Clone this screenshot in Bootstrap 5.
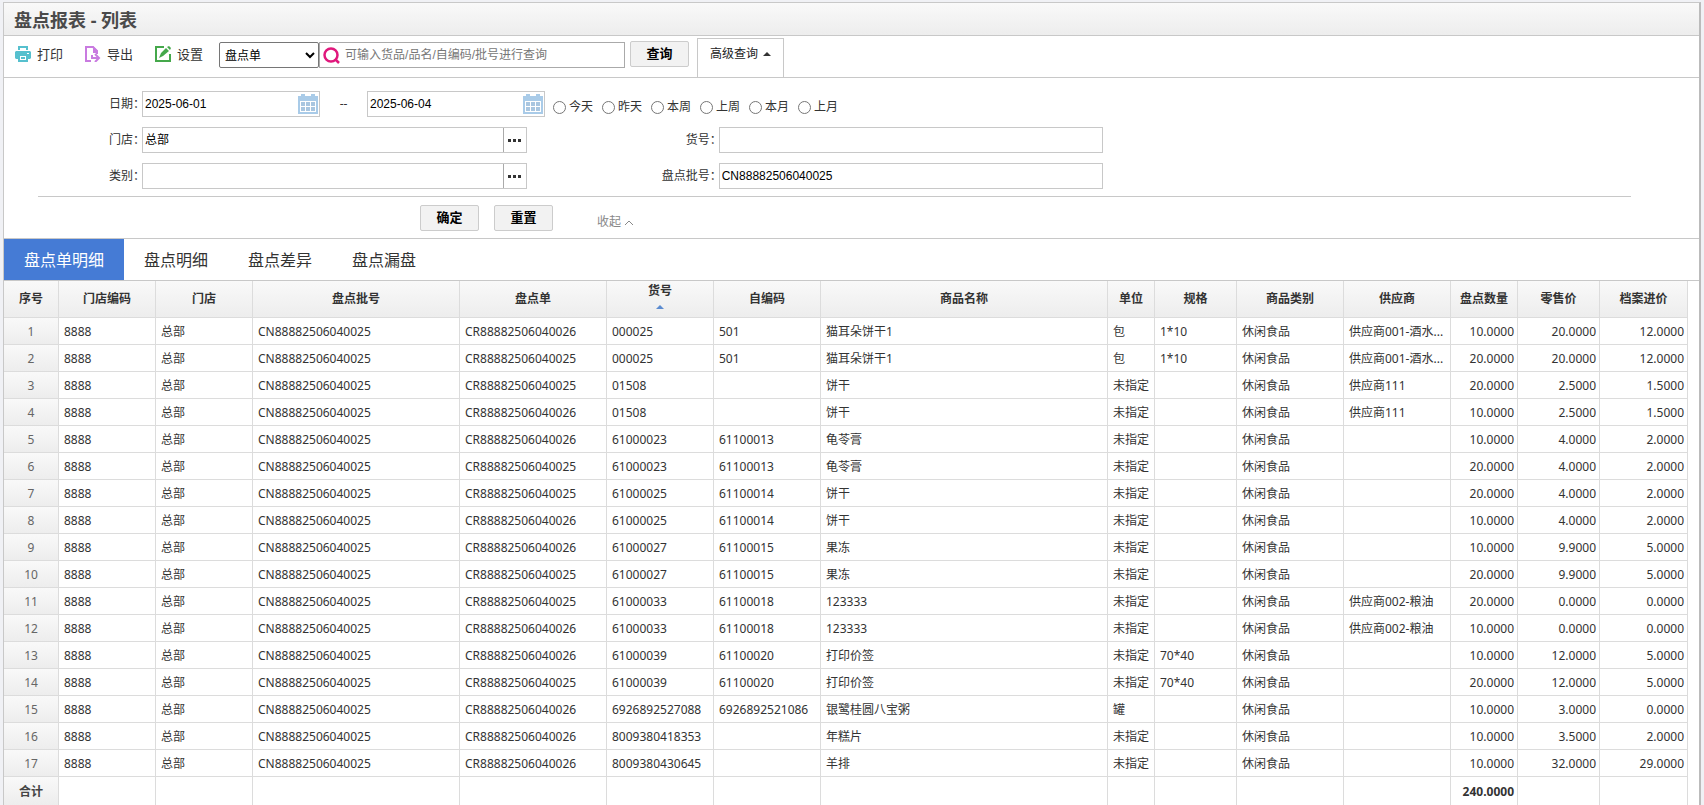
<!DOCTYPE html>
<html lang="zh-CN">
<head>
<meta charset="utf-8">
<meta name="viewport" content="width=device-width, initial-scale=1">
<title>盘点报表 - 列表</title>
<link href="https://cdn.jsdelivr.net/npm/bootstrap@5.3.0/dist/css/bootstrap.min.css" rel="stylesheet">
<style>
  :root { --line: #c8c8c8; --cell-line: #dcdcdc; --shade: linear-gradient(#f9f9f9, #ededed); }
  body { font-family: "Noto Sans", "Noto Sans CJK SC", sans-serif; font-size: 12px; line-height: 18px; color: #333; background: #f0f1f5; padding: 2px 3px 0; }
  .report-panel { min-height: calc(100vh - 2px); background: #fff; border: 1px solid var(--line); border-right: 2px solid #bbb; border-bottom: 0; }
  .panel-title { height: 33px; font-size: 18px; line-height: 34px; font-weight: 700; color: #4a4a4a; background: var(--shade); border-bottom: 1px solid var(--line); padding-left: 10px; }
  .toolbar { height: 42px; border-bottom: 1px solid var(--line); padding-left: 11px; }
  .tool-set { gap: 22px; padding-top: 8px; }
  .tool { font-size: 13px; line-height: 20px; color: #333; padding: 0; border: 0; background: none; gap: 6px; }
  .search-set { padding-top: 6px; }
  .kind-select { font-family: "Noto Sans", "Noto Sans CJK SC", sans-serif; width: 100px; height: 26px; font-size: 12px; line-height: 18px; padding: 0 1px; color: #000; background: #fff; border: 1px solid #767676; border-radius: 2px; }
  .field { height: 26px; border: 1px solid var(--line); background: #fff; min-width: 0; }
  .field input { font-family: "Liberation Sans", "Noto Sans CJK SC", sans-serif; border: 0; outline: 0; background: none; color: #000; padding: 0 2px; min-width: 0; width: 100%; font-size: 12px; line-height: 18px; }
  .field input::placeholder { color: #777; opacity: 1; }
  .search-field { width: 306px; border-color: #aaa; padding-left: 3px; }
  .search-field input { padding-left: 4px; }
  .more-btn { flex: none; width: 23px; padding: 0; border: 0; border-left: 1px solid #aaa; background: none; }
  .push-btn { width: 59px; height: 26px; font-size: 13px; line-height: 18px; font-weight: 700; color: #000; background: #f2f2f2; border: 1px solid #ccc; border-radius: 2px; padding: 0 0 2px; }
  .query-btn { margin: 5px 8px 0 5px; }
  .advanced-btn { width: 87px; height: 39px; margin-top: 2px; font-size: 12px; line-height: 18px; color: #222; background: #fff; border: 1px solid var(--line); border-bottom: 0; padding: 0 0 8px; gap: 5px; }
  .filters { border-bottom: 1px solid var(--line); height: 161px; }
  .filter-grid { display: grid; grid-template-columns: 138px 385fr 192px 385fr 596fr; row-gap: 10px; padding-top: 13px; }
  /* the full-width colon carries blank space on its right */
  .filter-grid .caption { text-align: right; margin-right: -3px; padding-top: 4px; white-space: nowrap; }
  .date-line { grid-column: 2 / -1; }
  .date-field { width: 178px; }
  .dash { width: 47px; text-align: center; }
  .quick { gap: 3px; margin-right: 9px; white-space: nowrap; padding-top: 7px; }
  .quick input { width: 13px; height: 13px; margin: 3px 0 0; }
  .filter-rule { height: 1px; background: var(--line); margin: 7px 68px 8px 34px; }
  .filter-actions { padding-left: 416px; gap: 15px; }
  .fold-link { color: #888; margin: 8px 0 0 29px; gap: 4px; }
  .report-tabs { height: 42px; border-bottom: 1px solid var(--line); }
  .report-tabs .nav-link { height: 41px; font-size: 16px; line-height: 24px; padding: 9px 20px 8px; color: #333; border-radius: 0; }
  .report-tabs .nav-link.active { color: #fff; background: #457bd5; }
  .grid-wrap { padding-right: 11px; }
  .stock-grid { width: 100%; table-layout: fixed; border-collapse: separate; border-spacing: 0; }
  .stock-grid th, .stock-grid td { height: 27px; padding: 2px 3px 0 5px; border: 0 solid var(--cell-line); border-width: 0 1px 1px 0; white-space: nowrap; overflow: hidden; text-overflow: ellipsis; }
  .stock-grid thead th { height: 37px; padding: 0; text-align: center; background: var(--shade); }
  .stock-grid .num { text-align: right; }
  .stock-grid .seq { text-align: center; padding: 2px 0 0; color: #666; background: var(--shade); font-weight: 400; }
  .stock-grid tfoot th, .stock-grid tfoot td { height: 28px; border-bottom: 0; font-weight: 700; }
  .stock-grid tfoot .seq { color: #444; font-weight: 700; }
  .sort-mark { display: block; margin: 5px auto 8px; }
  .w-seq { width: 55px; } .w-shop { width: 97px; } .w-batch { width: 207px; } .w-sheet { width: 147px; }
  .w-code { width: 107px; } .w-unit { width: 47px; } .w-price { width: 82px; } .w-qty { width: 67px; } .w-cost { width: 88px; }
</style>
</head>
<body>
<main class="report-panel">
  <h1 class="panel-title mb-0">盘点报表 - 列表</h1>

  <div class="toolbar d-flex align-items-start">
    <div class="tool-set d-flex me-3">
      <button type="button" class="tool d-flex align-items-center">
        <svg width="16" height="16" viewBox="0 0 16 16"><path fill="#56c0ce" fill-rule="evenodd" d="M3 0h10v4h-2V2H5v2H3zM1 5h14l1 1v6l-1 1h-2v3H3v-3H1l-1-1V6zM5 10v4h6v-4zM12 7v1h2V7z"/><path fill="#56c0ce" d="M6 11h4v2H6z"/></svg>打印</button>
      <button type="button" class="tool d-flex align-items-center">
        <svg width="16" height="16" viewBox="0 0 16 16" fill="none" stroke="#c97be0" stroke-width="2"><path d="M6 15H1V1h7l4 4v3"/><path fill="#c97be0" stroke="none" d="M8 0l5 5v2H8z"/><path d="M7 9v3h7M10 8l4 4-4 4"/></svg>导出</button>
      <button type="button" class="tool d-flex align-items-center">
        <svg width="16" height="16" viewBox="0 0 16 16"><path d="M9 1H1v14h14V8" fill="none" stroke="#45a84b" stroke-width="2"/><path fill="#45a84b" d="M11 2l3 3-6 5-4 2 2-5zM14 0l2 2-1 2-3-3z"/></svg>设置</button>
    </div>
    <div class="search-set d-flex">
      <select class="kind-select" aria-label="单据类型"><option>盘点单</option></select>
      <div class="field search-field d-flex align-items-center">
        <svg class="flex-shrink-0" width="18" height="18" viewBox="0 0 18 18" fill="none" stroke="#e0187c" stroke-width="2.5"><circle cx="8" cy="9" r="6.500"/><path d="M12 13l4 4"/></svg>
        <input type="text" aria-label="查询内容" placeholder="可输入货品/品名/自编码/批号进行查询">
      </div>
    </div>
    <button type="button" class="push-btn query-btn">查询</button>
    <button type="button" class="advanced-btn d-flex align-items-center justify-content-center">高级查询<svg width="8" height="4" viewBox="0 0 8 4"><path fill="#333" d="M0 4l4-4 4 4z"/></svg></button>
  </div>

  <form class="filters">
    <div class="filter-grid">
      <label class="caption" for="date-from">日期：</label>
      <div class="date-line d-flex">
        <div class="field date-field d-flex align-items-center"><input id="date-from" type="text" value="2025-06-01"><svg class="flex-shrink-0" width="21" height="20" viewBox="0 0 21 20"><use href="#calendar"/></svg></div>
        <span class="dash pt-1">--</span>
        <div class="field date-field d-flex align-items-center me-2"><input type="text" aria-label="结束日期" value="2025-06-04"><svg class="flex-shrink-0" width="21" height="20" viewBox="0 0 21 20"><g id="calendar"><path fill="#a9cbe8" d="M0 2h3V0h4v2h6V0h4v2h3v18H0z"/><path fill="#fff" d="M2 7h16v11H2z"/><path fill="#a9c6e0" d="M3 8h4v4H3zM8 8h4v4H8zM13 8h4v4h-4zM3 13h4v4H3zM8 13h4v4H8zM13 13h4v4h-4z"/></g></svg></div>
        <label class="quick d-flex"><input type="radio" name="range">今天</label>
        <label class="quick d-flex"><input type="radio" name="range">昨天</label>
        <label class="quick d-flex"><input type="radio" name="range">本周</label>
        <label class="quick d-flex"><input type="radio" name="range">上周</label>
        <label class="quick d-flex"><input type="radio" name="range">本月</label>
        <label class="quick d-flex"><input type="radio" name="range">上月</label>
      </div>
      <label class="caption" for="shop">门店：</label>
      <div class="field d-flex"><input id="shop" type="text" value="总部"><button type="button" class="more-btn" aria-label="选择门店"><svg width="14" height="4" viewBox="0 0 14 4"><path id="dots" fill="#333" d="M0 0h3v3H0zM5 0h3v3H5zM10 0h3v3h-3z"/></svg></button></div>
      <label class="caption" for="item">货号：</label>
      <div class="field d-flex"><input id="item" type="text"></div><span></span>
      <label class="caption" for="category">类别：</label>
      <div class="field d-flex"><input id="category" type="text"><button type="button" class="more-btn" aria-label="选择类别"><svg width="14" height="4" viewBox="0 0 14 4"><use href="#dots"/></svg></button></div>
      <label class="caption" for="batch">盘点批号：</label>
      <div class="field d-flex"><input id="batch" type="text" value="CN88882506040025"></div>
    </div>
    <div class="filter-rule"></div>
    <div class="filter-actions d-flex align-items-start">
      <button type="button" class="push-btn">确定</button>
      <button type="reset" class="push-btn">重置</button>
      <a href="#" class="fold-link d-flex align-items-center text-decoration-none">收起<svg width="8" height="5" viewBox="0 0 8 5"><path d="M0 5l4-4 4 4" fill="none" stroke="#888"/></svg></a>
    </div>
  </form>

  <nav class="report-tabs nav">
    <a class="nav-link active" href="#">盘点单明细</a>
    <a class="nav-link" href="#">盘点明细</a>
    <a class="nav-link" href="#">盘点差异</a>
    <a class="nav-link" href="#">盘点漏盘</a>
  </nav>

  <div class="grid-wrap">
    <table class="stock-grid">
      <colgroup><col class="w-seq"><col class="w-shop"><col class="w-shop"><col class="w-batch"><col class="w-sheet"><col class="w-code"><col class="w-code"><col><col class="w-unit"><col class="w-price"><col class="w-code"><col class="w-code"><col class="w-qty"><col class="w-price"><col class="w-cost"></colgroup>
      <thead><tr><th>序号</th><th>门店编码</th><th>门店</th><th>盘点批号</th><th>盘点单</th><th>货号<svg class="sort-mark" width="8" height="4" viewBox="0 0 8 4"><path fill="#5b8bd0" d="M0 4l4-4 4 4z"/></svg></th><th>自编码</th><th>商品名称</th><th>单位</th><th>规格</th><th>商品类别</th><th>供应商</th><th>盘点数量</th><th>零售价</th><th>档案进价</th></tr></thead>
      <tbody id="rows"></tbody>
      <tfoot><tr><th class="seq">合计</th><td></td><td></td><td></td><td></td><td></td><td></td><td></td><td></td><td></td><td></td><td></td><td class="num">240.0000</td><td></td><td></td></tr></tfoot>
    </table>
  </div>
</main>
<script src="https://cdn.jsdelivr.net/npm/bootstrap@5.3.0/dist/js/bootstrap.bundle.min.js"></script>
<script>
  // sheet suffix, item no., own code, name, unit, spec, supplier, quantity, retail price, cost price
  const records = [
    ['26', '000025', '501', '猫耳朵饼干1', '包', '1*10', '供应商001-酒水...', 10, 20, 12],
    ['25', '000025', '501', '猫耳朵饼干1', '包', '1*10', '供应商001-酒水...', 20, 20, 12],
    ['25', '01508', '', '饼干', '未指定', '', '供应商111', 20, 2.5, 1.5],
    ['26', '01508', '', '饼干', '未指定', '', '供应商111', 10, 2.5, 1.5],
    ['26', '61000023', '61100013', '龟苓膏', '未指定', '', '', 10, 4, 2],
    ['25', '61000023', '61100013', '龟苓膏', '未指定', '', '', 20, 4, 2],
    ['25', '61000025', '61100014', '饼干', '未指定', '', '', 20, 4, 2],
    ['26', '61000025', '61100014', '饼干', '未指定', '', '', 10, 4, 2],
    ['26', '61000027', '61100015', '果冻', '未指定', '', '', 10, 9.9, 5],
    ['25', '61000027', '61100015', '果冻', '未指定', '', '', 20, 9.9, 5],
    ['25', '61000033', '61100018', '123333', '未指定', '', '供应商002-粮油', 20, 0, 0],
    ['26', '61000033', '61100018', '123333', '未指定', '', '供应商002-粮油', 10, 0, 0],
    ['26', '61000039', '61100020', '打印价签', '未指定', '70*40', '', 10, 12, 5],
    ['25', '61000039', '61100020', '打印价签', '未指定', '70*40', '', 20, 12, 5],
    ['26', '6926892527088', '6926892521086', '银鹭桂圆八宝粥', '罐', '', '', 10, 3, 0],
    ['26', '8009380418353', '', '年糕片', '未指定', '', '', 10, 3.5, 2],
    ['26', '8009380430645', '', '羊排', '未指定', '', '', 10, 32, 29]
  ];
  document.getElementById('rows').innerHTML = records.map((r, i) => {
    const text = ['8888', '总部', 'CN88882506040025', 'CR888825060400' + r[0], r[1], r[2], r[3], r[4], r[5], '休闲食品', r[6]];
    return '<tr><th class="seq">' + (i + 1) + '</th>' +
      text.map(t => '<td>' + t + '</td>').join('') +
      r.slice(7).map(n => '<td class="num">' + n.toFixed(4) + '</td>').join('') + '</tr>';
  }).join('');
</script>
</body>
</html>
